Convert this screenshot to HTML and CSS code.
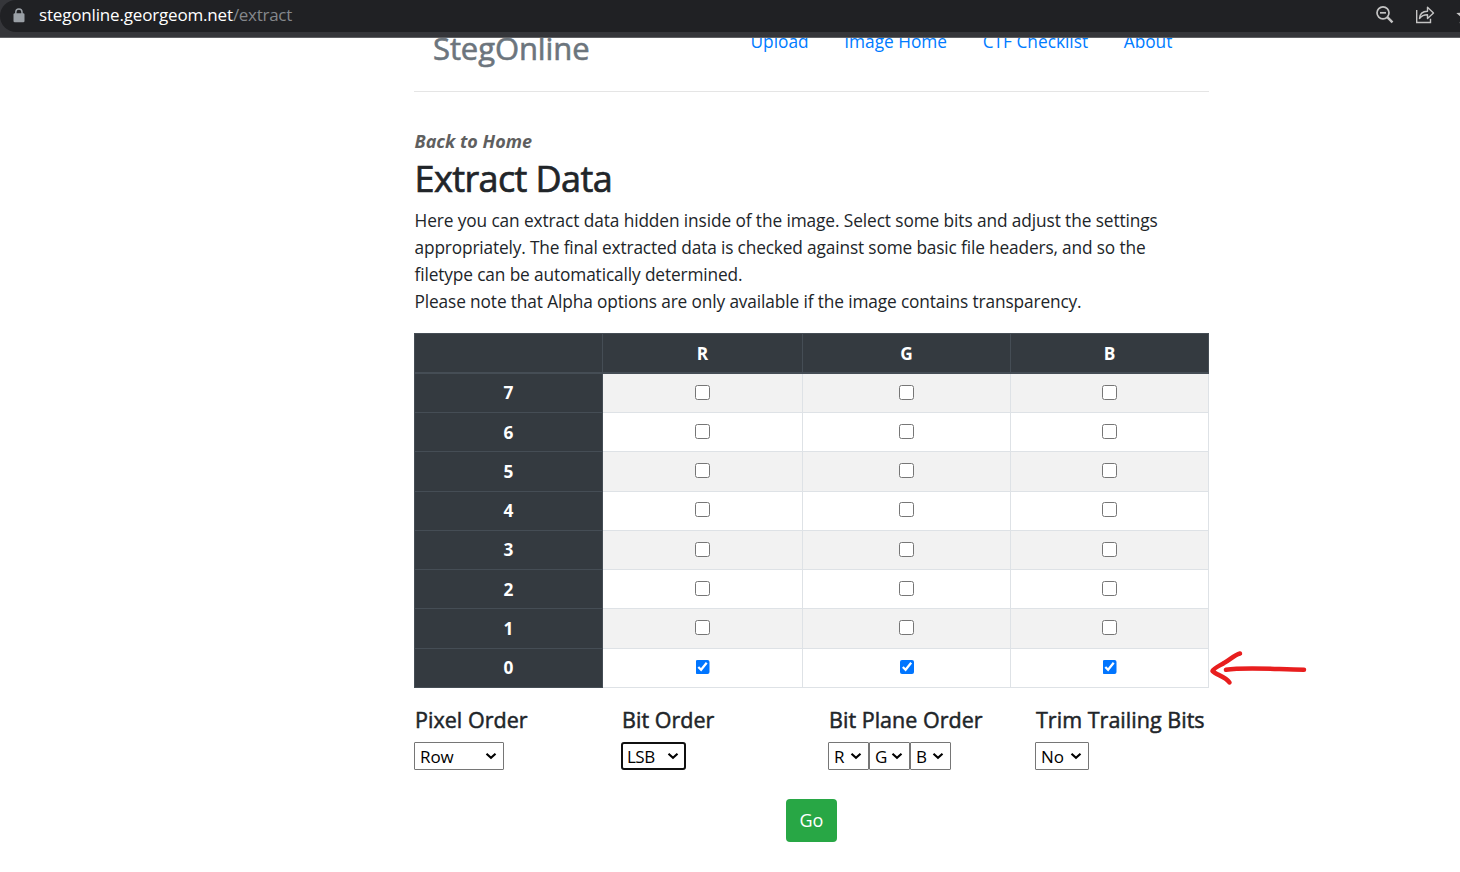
FILE: index.html
```html
<!DOCTYPE html>
<html lang="en">
<head>
<meta charset="utf-8">
<title>StegOnline</title>
<link rel="stylesheet" href="styles.css">
</head>
<body>
<header class="browser">
  <div class="address">
    <svg class="lock" width="12" height="15" viewBox="0 0 12 15"><path d="M2.800 6V4a3 3 0 0 1 6.200 0v2" fill="none" stroke="#9aa0a6" stroke-width="1.500"/><rect x=".5" y="5.200" width="11" height="9" rx="1.300" fill="#9aa0a6"/></svg>
    <div class="url"><span class="host">stegonline.georgeom.net</span><span class="path">/extract</span></div>
    <div class="tools">
      <svg width="20" height="20" viewBox="0 0 20 20" fill="none" stroke="#c4c4c4" stroke-width="1.700"><circle cx="8" cy="7.800" r="6"/><path d="M5 7.800h6"/><path d="M12.300 12.100l5.200 5.200" stroke-width="2.400"/></svg>
      <svg width="20" height="20" viewBox="0 0 20 20" fill="none" stroke="#c4c4c4" stroke-width="1.400"><path d="M1.700 5v12.500h13.800v-3.700"/><path d="M4.500 13.500c.3-5 3.300-7.300 8-7.300V2.300l6 5.600-6 5.600V9.700c-3.800 0-6 .9-8 3.800z" stroke-linejoin="round"/></svg>
      <svg width="20" height="20" viewBox="0 0 20 20" fill="#c4c4c4"><path d="M10 1.800l2.500 5.700 6.200.6-4.700 4.100 1.400 6.100-5.400-3.200-5.400 3.200L6 12.200 1.300 8.100l6.200-.6z"/></svg>
    </div>
  </div>
</header>
<main class="page">
  <div class="masthead">
    <h3 class="brand">StegOnline</h3>
    <nav class="nav"><a>Upload</a><a>Image Home</a><a>CTF Checklist</a><a>About</a></nav>
  </div>
  <a class="back">Back to Home</a>
  <h1 class="title">Extract Data</h1>
  <p class="intro"><span class="l1">Here you can extract data hidden inside of the image. Select some bits and adjust the settings</span><br><span class="l2">appropriately. The final extracted data is checked against some basic file headers, and so the</span><br>filetype can be automatically determined.<br>Please note that Alpha options are only available if the image contains transparency.</p>
  <div class="grid-wrap">
    <table class="bits">
      <colgroup><col class="c0"><col class="c1"><col class="c2"><col class="c3"></colgroup>
      <thead><tr><th></th><th>R</th><th>G</th><th>B</th></tr></thead>
      <tbody>
        <tr><th>7</th><td><input type="checkbox"></td><td><input type="checkbox"></td><td><input type="checkbox"></td></tr>
        <tr class="low"><th>6</th><td><input type="checkbox"></td><td><input type="checkbox"></td><td><input type="checkbox"></td></tr>
        <tr class="tall low"><th>5</th><td><input type="checkbox"></td><td><input type="checkbox"></td><td><input type="checkbox"></td></tr>
        <tr class="raised"><th>4</th><td><input type="checkbox"></td><td><input type="checkbox"></td><td><input type="checkbox"></td></tr>
        <tr><th>3</th><td><input type="checkbox"></td><td><input type="checkbox"></td><td><input type="checkbox"></td></tr>
        <tr class="low"><th>2</th><td><input type="checkbox"></td><td><input type="checkbox"></td><td><input type="checkbox"></td></tr>
        <tr class="tall low"><th>1</th><td><input type="checkbox"></td><td><input type="checkbox"></td><td><input type="checkbox"></td></tr>
        <tr><th>0</th><td><input type="checkbox" checked></td><td><input type="checkbox" checked></td><td><input type="checkbox" checked></td></tr>
      </tbody>
    </table>
    <svg class="arrow" width="102" height="40" viewBox="0 0 102 40" fill="none" stroke="#e81e1e" stroke-width="4.500" stroke-linecap="round" stroke-linejoin="round"><path d="M31 4.500C25 6 21 11 15 14C10 17 5 19 3.500 22C7 26 16 27 20.500 33.500"/><path d="M17 20.800C35 18 60 20 95 20.800"/></svg>
  </div>
  <div class="options">
    <section><h5>Pixel Order</h5><div class="row"><label class="pick w90"><select><option>Row</option></select><svg viewBox="0 0 12 8"><path d="M1.500 1.700L6 5.800l4.500-4.100"/></svg></label></div></section>
    <section><h5>Bit Order</h5><div class="row"><label class="pick w65 focused"><select><option>LSB</option></select><svg viewBox="0 0 12 8"><path d="M1.500 1.700L6 5.800l4.500-4.100"/></svg></label></div></section>
    <section><h5>Bit Plane Order</h5><div class="row"><label class="pick w41"><select><option>R</option></select><svg viewBox="0 0 12 8"><path d="M1.500 1.700L6 5.800l4.500-4.100"/></svg></label><label class="pick w41"><select><option>G</option></select><svg viewBox="0 0 12 8"><path d="M1.500 1.700L6 5.800l4.500-4.100"/></svg></label><label class="pick w41"><select><option>B</option></select><svg viewBox="0 0 12 8"><path d="M1.500 1.700L6 5.800l4.500-4.100"/></svg></label></div></section>
    <section><h5>Trim Trailing Bits</h5><div class="row"><label class="pick w54"><select><option>No</option></select><svg viewBox="0 0 12 8"><path d="M1.500 1.700L6 5.800l4.500-4.100"/></svg></label></div></section>
  </div>
  <button class="go">Go</button>
</main>
</body>
</html>
```
FILE: styles.css
```css
* { box-sizing: border-box; }
body { margin: 0; height: 872px; overflow: hidden; background: #fff; color: #212529; font: 400 18px/27px "Open Sans", "Noto Sans", sans-serif; }
.browser { height: 38px; background: #35363a; border-bottom: 1px solid #5f6063; }
.address { height: 32px; display: flex; align-items: center; padding-left: 13px; background: #202124; border-radius: 16px 0 0 16px; overflow: hidden; }
.lock { flex: none; margin: -2px 14px 0 0; }
.url { margin-top: -2px; font-size: 17px; line-height: 30px; letter-spacing: -.17px; white-space: nowrap; color: #fff; }
.path { color: #85888c; letter-spacing: -.29px; }
.tools { display: flex; gap: 20px; margin: -2px -15px 0 auto; }
.page { width: 795px; margin-left: 414px; }
.masthead { height: 54px; border-bottom: 1px solid #e5e5e5; display: flex; align-items: flex-start; overflow: hidden; padding-left: 19px; }
.brand { margin: -9px 0 0; width: 317.5px; font-size: 31px; line-height: 38px; font-weight: 500; letter-spacing: -.1px; color: #6c757d; -webkit-text-stroke: .6px currentColor; }
.nav { display: flex; gap: 35.6px; margin-top: -10px; font-size: 17.3px; white-space: nowrap; color: #007bff; }
.back { display: block; margin: 36px 0 0 .5px; font-weight: 700; font-style: italic; color: #5f5f5f; }
.title { margin: 2px 0 0 .5px; font-size: 36px; line-height: 43px; font-weight: 500; letter-spacing: -.6px; white-space: nowrap; -webkit-text-stroke: .7px currentColor; }
.intro { margin: 7px 0 18px .5px; font-size: 17.3px; letter-spacing: -.127px; white-space: nowrap; }
.l1 { letter-spacing: -.1px; }
.l2 { letter-spacing: -.15px; }
.grid-wrap { position: relative; height: 355px; }
.bits { width: 795px; table-layout: fixed; border-collapse: separate; border-spacing: 0; border: solid #454d55; border-width: 1px 0 0 1px; }
.c0 { width: 188px; } .c1 { width: 200px; } .c2 { width: 208px; } .c3 { width: 198px; }
.bits th, .bits td { height: 39px; padding: 0; text-align: center; vertical-align: top; border: solid #dee2e6; border-width: 0 1px 1px 0; }
.bits th { background: #343a40; border-color: #454d55; color: #fff; font-weight: 700; font-size: 17.3px; line-height: 38px; }
.bits thead th { height: 40px; border-bottom-width: 2px; padding-top: 1px; line-height: 37px; }
.bits .low th { padding-top: 1px; line-height: 37px; }
.bits .tall th, .bits .tall td { height: 40px; }
.bits tbody tr:nth-child(odd) td { background: #f2f2f2; }
.bits input { display: block; width: 15px; height: 15px; margin: 11px auto 0; }
.bits .raised input { margin-top: 10px; }
.bits input:checked { width: 14px; height: 14px; }
.bits td:nth-child(even) input:checked { translate: -.5px 0; }
.arrow { position: absolute; left: 795px; top: 316px; }
.options { display: grid; grid-template-columns: repeat(4, 207px); margin-top: 18px; }
.options h5 { margin: 0 0 9px 1px; font-size: 21.5px; line-height: 27px; font-weight: 500; white-space: nowrap; letter-spacing: .03px; -webkit-text-stroke: .5px currentColor; }
.row { display: flex; }
.pick { display: grid; height: 28px; flex: none; }
.pick select, .pick svg { grid-area: 1 / 1; }
.pick select { appearance: none; width: 100%; height: 28px; margin: 0; padding: 1px 0 0 5px; border: 1px solid #767676; border-radius: 1px; background: #fff; color: #000; font: 400 17px/25px "Open Sans", sans-serif; letter-spacing: -.1px; }
.pick svg { width: 12px; height: 8px; justify-self: end; align-self: center; margin-right: 7px; fill: none; stroke: #000; stroke-width: 2.1; pointer-events: none; }
.focused select { border: 2px solid #101010; border-radius: 3px; padding: 0 0 0 4px; letter-spacing: -.5px; }
.w90 { width: 90px; } .w65 { width: 65px; } .w41 { width: 41px; } .w54 { width: 54px; }
.go { display: block; width: 51px; height: 43px; margin: 29px auto 0; border: 0; border-radius: 4px; background: #28a745; color: #fff; font: 400 18px/43px "Open Sans", sans-serif; padding: 0; }
```
